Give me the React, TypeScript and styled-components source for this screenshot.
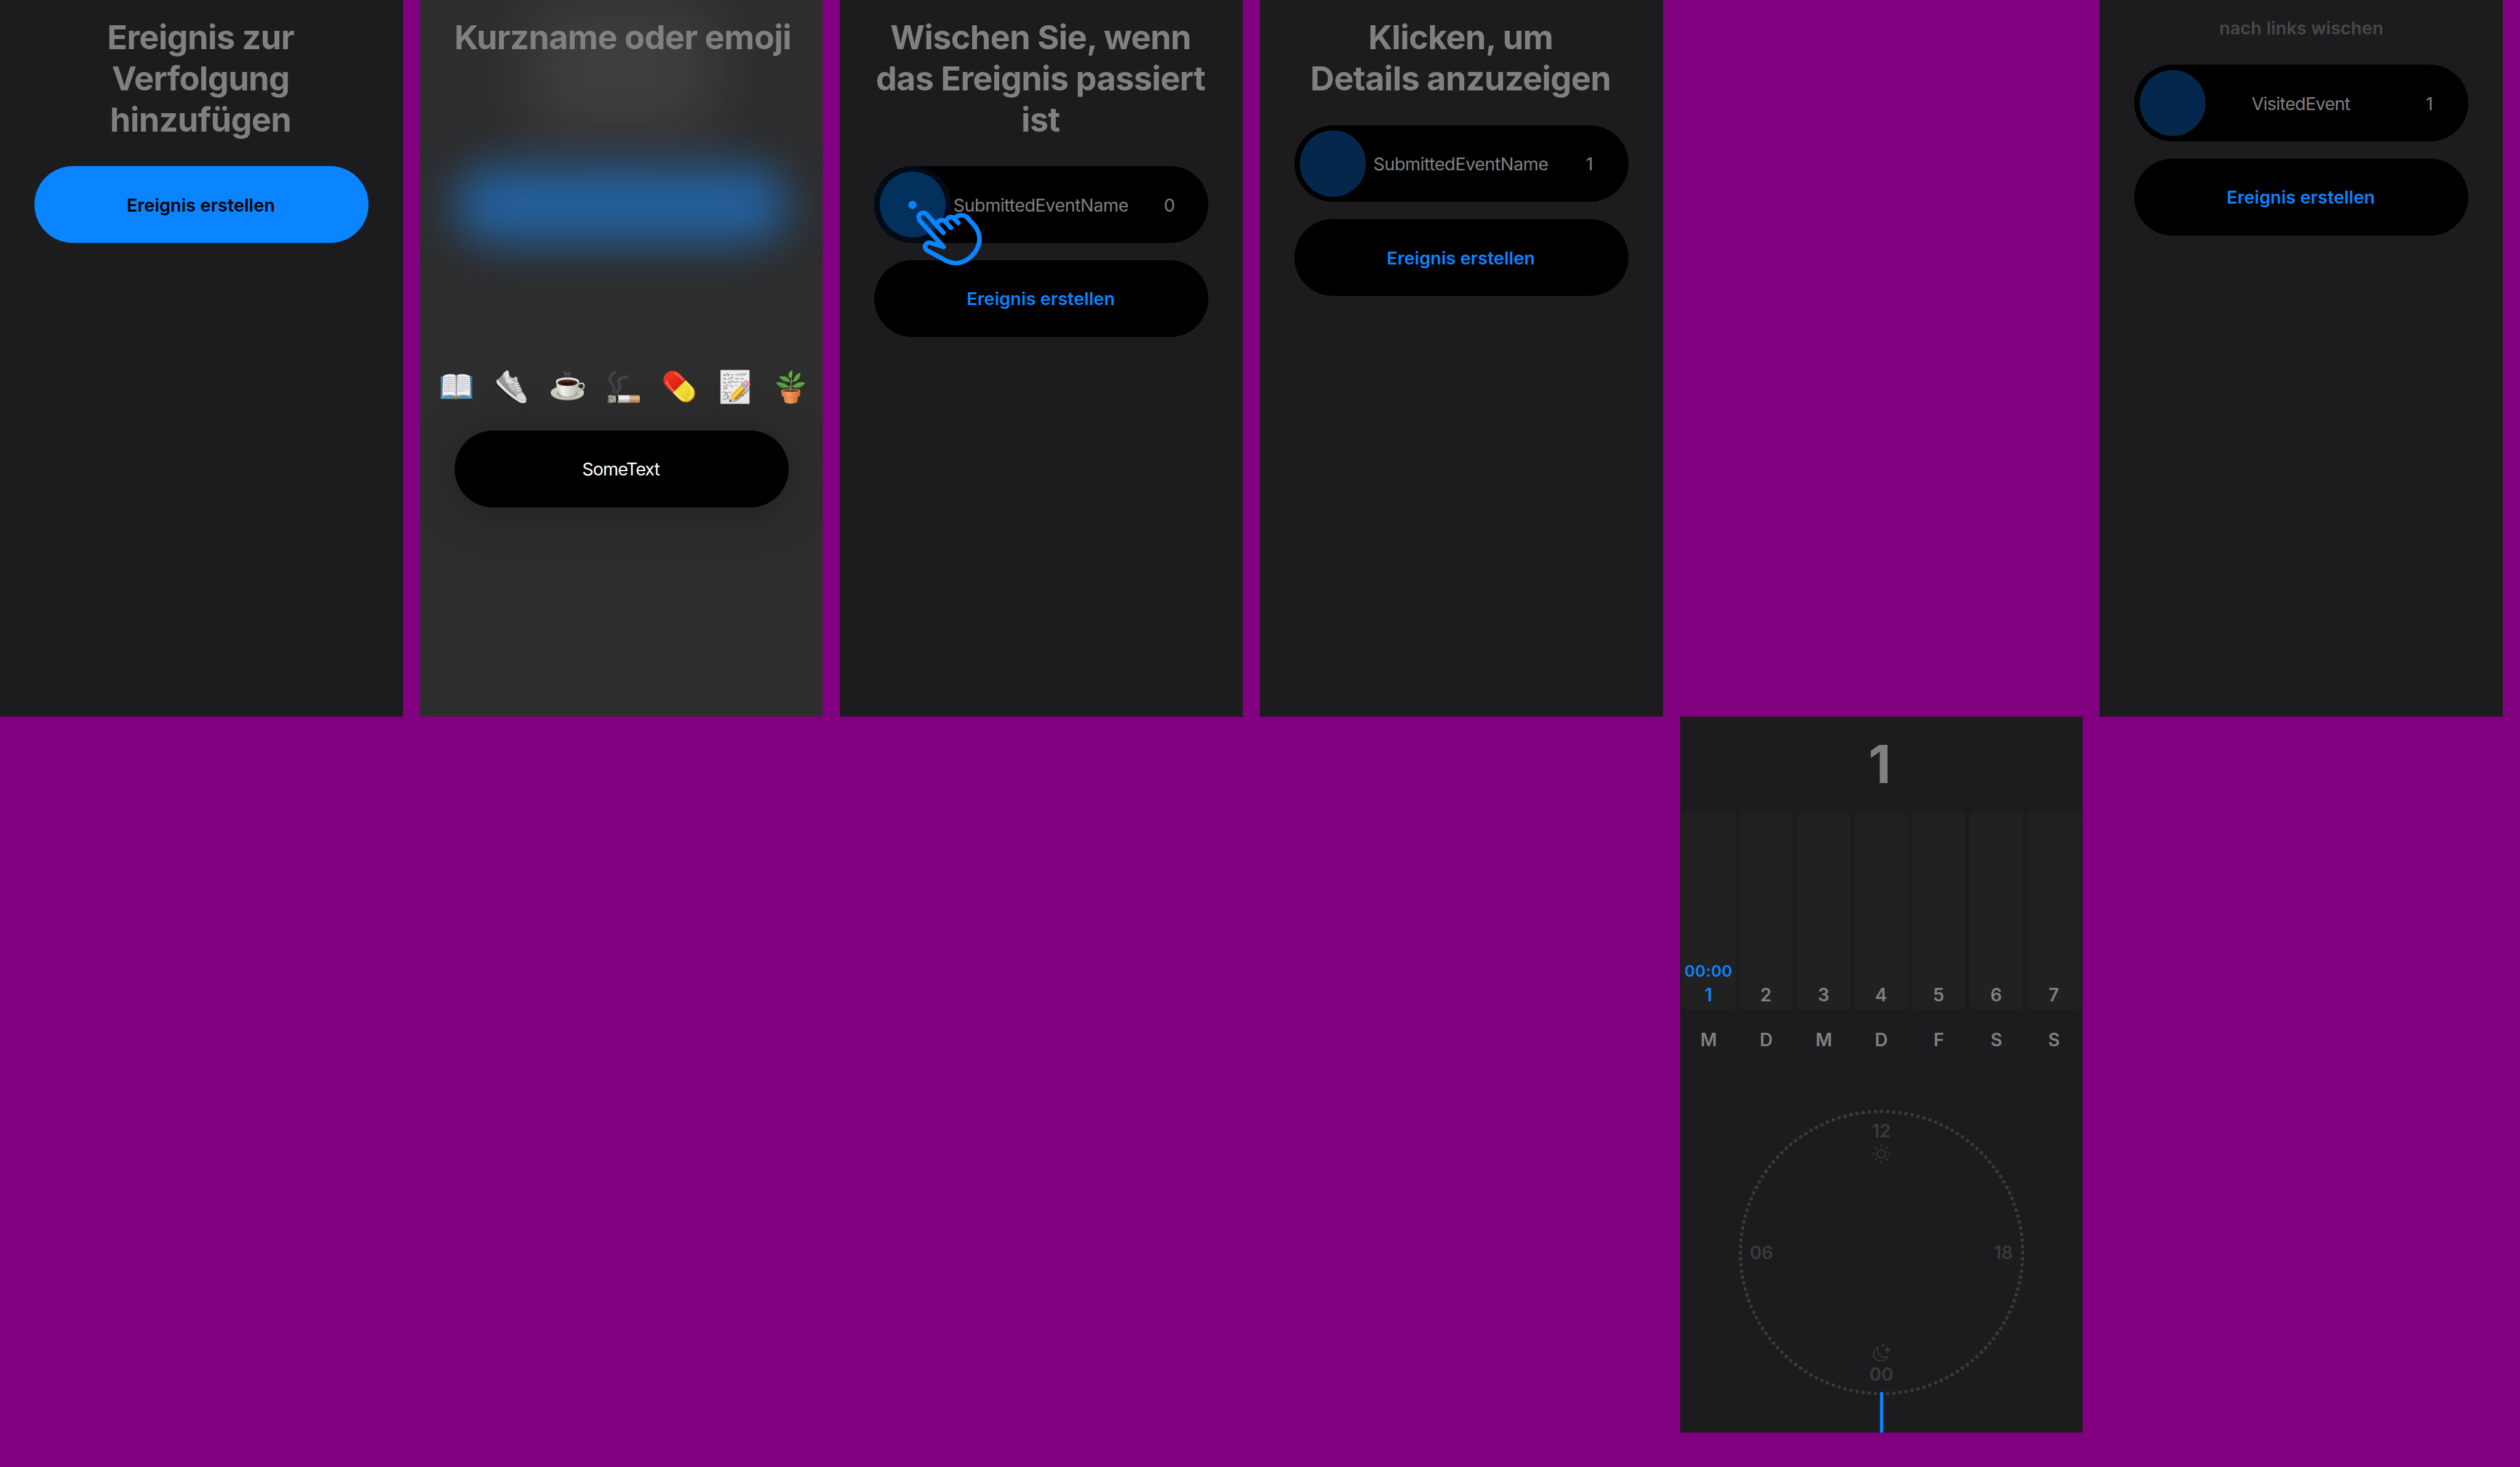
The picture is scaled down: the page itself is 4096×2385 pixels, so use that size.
import React from "react";
import styled, { createGlobalStyle, css } from "styled-components";

/* 1rem equals 100 design pixels of the 4692px wide board. */
const GlobalStyle = createGlobalStyle`
  html { font-size: calc(100vw / 46.92); }
  body {
    margin: 0;
    background: #800080;
    color: #808080;
    font-family: Inter, "Liberation Sans", sans-serif;
    overflow: hidden;
  }
  *, *::before, *::after { box-sizing: border-box; }
`;

const ACCENT = "#0a84ff";
const SURFACE = "#1c1c1e";
const FAINT = "#3a3a3c";

const Board = styled.main`
  display: grid;
  grid-template-columns: repeat(6, 7.5rem);
  grid-template-rows: repeat(2, 13.34rem);
  column-gap: 0.32rem;
  width: 46.92rem;
  height: 27.32rem;
  background: #800080;
`;

const Screen = styled.section<{ $column: number; $row?: number }>`
  grid-column: ${(p) => p.$column};
  grid-row: ${(p) => p.$row ?? 1};
  display: flex;
  flex-direction: column;
  background: ${SURFACE};
  overflow: hidden;
`;

const Onboarding = styled(Screen)`
  padding: 0.322rem 0.64rem;
`;

const Title = styled.h1`
  margin: 0 0.03rem 0.48rem 0;
  font-size: 0.62rem;
  font-weight: 680;
  line-height: 0.765rem;
  letter-spacing: -0.014em;
  text-align: center;
  white-space: nowrap;
`;

const TitleLine = styled.span`
  display: block;
`;

const Hint = styled.p`
  margin: 0 0 0.48rem;
  font-size: 0.33rem;
  font-weight: 600;
  line-height: 0.405rem;
  letter-spacing: 0.004em;
  text-align: center;
  color: #48484a;
`;

const Stack = styled.div`
  display: flex;
  flex-direction: column;
  gap: 0.32rem;
`;

const pill = css`
  height: 1.43rem;
  width: 100%;
  border-radius: 0.715rem;
  background: #000;
`;

const CreateButton = styled.button<{ $primary?: boolean }>`
  ${pill}
  border: 0;
  padding: 0.02rem 0.02rem 0 0;
  font: 620 0.33rem / 0.41rem Inter, "Liberation Sans", sans-serif;
  letter-spacing: 0.002em;
  color: ${(p) => (p.$primary ? "#000" : ACCENT)};
  ${(p) => p.$primary && `background: ${ACCENT};`}
`;

const EventRow = styled.div`
  ${pill}
  position: relative;
  display: grid;
  grid-template-columns: 1.43rem 1fr 1.43rem;
  align-items: center;
  justify-items: center;
  font-size: 0.33rem;
  line-height: 0.41rem;
`;

const KnobRing = styled.div<{ $pressed?: boolean }>`
  display: grid;
  place-items: center;
  width: 1.43rem;
  height: 1.43rem;
  border-radius: 50%;
  background: ${(p) => (p.$pressed ? "#010b16" : "transparent")};
`;

const Knob = styled.div<{ $pressed?: boolean }>`
  width: 1.23rem;
  height: 1.23rem;
  border-radius: 50%;
  background: ${(p) => (p.$pressed ? "#04305d" : "#03284c")};
`;

const EventName = styled.span<{ $tracking: number }>`
  padding: 0.02rem 0.02rem 0 0;
  letter-spacing: ${(p) => p.$tracking}em;
  white-space: nowrap;
`;

const EventCount = styled.span`
  padding: 0.02rem 0.02rem 0 0;
`;

const HandOverlay = styled.svg`
  position: absolute;
  left: -0.18rem;
  top: -0.1rem;
  width: 2.4rem;
  height: 2.1rem;
  z-index: 1;
`;

const ComposerScreen = styled(Onboarding)`
  position: relative;
  background: #2d2d2d;
  isolation: isolate;
`;

const GlowTitle = styled.div`
  position: absolute;
  z-index: -1;
  left: 2.05rem;
  top: 0.1rem;
  width: 3.4rem;
  height: 2.4rem;
  background: rgba(255, 255, 255, 0.085);
  filter: blur(0.6rem);
`;

const GlowButton = styled.div`
  position: absolute;
  z-index: -1;
  left: 0.64rem;
  top: 3.1rem;
  width: 6.22rem;
  height: 1.43rem;
  border-radius: 0.715rem;
  background: rgba(28, 140, 255, 0.55);
  filter: blur(0.42rem);
`;

const EmojiRow = styled.div`
  display: flex;
  gap: 0.4rem;
  margin: 5.253rem 0 0.48rem -0.285rem;
`;

const EmojiIcon = styled.svg`
  flex: none;
  width: 0.64rem;
  height: 0.72rem;
`;

const NameField = styled.div`
  ${pill}
  display: grid;
  place-items: center;
  flex: none;
  color: #fff;
  font-size: 0.33rem;
  line-height: 0.41rem;
  box-shadow: 0 0.06rem 0.9rem rgba(0, 0, 0, 0.32);
`;

const Total = styled.header`
  display: grid;
  place-items: center;
  height: 1.79rem;
  padding-right: 0.06rem;
  font-size: 0.97rem;
  font-weight: 700;
  line-height: 1;
`;

const Week = styled.div`
  display: grid;
  grid-template-columns: repeat(7, 1fr);
  font-size: 0.335rem;
  font-weight: 620;
  line-height: 0.41rem;
  text-align: center;
`;

const DayBar = styled.div<{ $active?: boolean }>`
  display: flex;
  flex-direction: column;
  justify-content: flex-end;
  gap: 0.06rem;
  height: 3.68rem;
  margin: 0 0.04rem;
  padding: 0 0.01rem 0.075rem 0;
  border-radius: 0.08rem;
  background: #212121;
  color: ${(p) => (p.$active ? ACCENT : "inherit")};
`;

const DayTime = styled.span`
  font-size: 0.295rem;
  line-height: 0.35rem;
  letter-spacing: 0.012em;
`;

const WeekNames = styled(Week)`
  margin-top: 0.36rem;
`;

const Dial = styled.div`
  position: relative;
  display: flex;
  flex-direction: column;
  justify-content: space-between;
  align-self: center;
  width: 5.26rem;
  height: 5.26rem;
  margin-top: 1.12rem;
  padding: 0.165rem 0.18rem 0.155rem 0.18rem;
  color: ${FAINT};
  font-size: 0.335rem;
  font-weight: 640;
  line-height: 0.41rem;
`;

const DialPole = styled.div`
  display: flex;
  flex-direction: column;
  align-items: center;
  gap: 0.03rem;
`;

const DialSides = styled.div`
  display: flex;
  justify-content: space-between;
`;

const DialDots = styled.svg`
  position: absolute;
  left: -0.1rem;
  top: -0.1rem;
  width: 5.46rem;
  height: 6.2rem;
`;

const DialIcon = styled.svg`
  width: 0.36rem;
  height: 0.36rem;
`;

function TitleBlock({ lines }: { lines: string[] }) {
  return (
    <Title>
      {lines.map((line) => (
        <TitleLine key={line}>{line}</TitleLine>
      ))}
    </Title>
  );
}

function SwipeHand() {
  return (
    <HandOverlay viewBox="0 0 720 630" fill="none" stroke={ACCENT} strokeWidth="26" strokeLinecap="round" strokeLinejoin="round">
      <circle cx="268.5" cy="244.5" r="23" fill={ACCENT} stroke="none" />
      <path d="M441 400L350 299C322 271 287 304 312 335L442 479L371 457C340 447 327 485 353 500L452 554C518 588 578 563 618 508C652 460 650 405 616 361L570 310C550 298 524 300 506 316" />
      <path d="M407 345C418 326 442 325 454 340L483 372M456 333C468 308 489 308 500 320L524 345" />
    </HandOverlay>
  );
}

type EventProps = { name: string; count: number; tracking?: number; pressed?: boolean };

function EventItem({ name, count, tracking = -0.018, pressed }: EventProps) {
  return (
    <EventRow>
      <KnobRing $pressed={pressed}>
        <Knob $pressed={pressed} />
      </KnobRing>
      <EventName $tracking={tracking}>{name}</EventName>
      <EventCount>{count}</EventCount>
      {pressed && <SwipeHand />}
    </EventRow>
  );
}

function Book() {
  const rows = [72, 83, 94, 105, 116, 127, 138, 149];
  return (
    <EmojiIcon viewBox="22.5 6 192 216" role="img" aria-label="Buch">
      <path d="M30 64L206 62L207 189L131 190Q118 196 105 191L30 191Z" fill="#2f7ba3" />
      <path d="M34 180H203V186H34Z" fill="#5fb0d6" />
      <path d="M102 181Q118 172 133 181Q130 192 118 192Q106 192 102 181Z" fill="#8a7420" />
      <path d="M41 66L39 179Q80 168 118 180Q156 168 198 179L196 66Z" fill="#a9a79f" />
      <path d="M45 60Q80 46 114 56L118 62L122 56Q156 46 192 60L194 171Q154 160 118 172Q84 160 42 171Z" fill="#f0f0f5" />
      <path d="M112 56H124L121 173H115Z" fill="#77767a" />
      <path d="M108 57L118 66V170L110 164Z" fill="#c6c5cc" />
      <g stroke="#85858f" strokeWidth="3" strokeDasharray="9 2 5 2 12 2">
        {rows.map((y) => (
          <path key={y} d={`M50 ${y}Q80 ${y - 6} 106 ${y}M129 ${y - 2}Q155 ${y - 6} ${y > 145 ? 166 : 187} ${y}`} fill="none" />
        ))}
      </g>
    </EmojiIcon>
  );
}

function Shoe() {
  return (
    <EmojiIcon viewBox="334.5 6 192 216" role="img" aria-label="Laufschuh">
      <path d="M343 86L352 82Q400 150 478 202L512 204Q506 216 490 214Q466 212 434 186Q380 140 344 102Z" fill="#d9d8d6" />
      <path d="M343 92L346 112Q372 134 392 154L436 188L470 210" fill="none" stroke="#161616" strokeWidth="4" />
      <path d="M356 78Q378 62 384 44L402 30L412 33L418 64L440 74L452 64L461 70L464 98L486 146Q510 172 513 194Q510 208 490 206Q470 202 440 176Q390 132 350 90Z" fill="#b3b0ae" />
      <path d="M372 66Q390 70 400 100L424 140L462 172L452 184Q400 144 356 88Z" fill="#989491" />
      <path d="M385 46L402 32L411 36L417 66L406 78Q388 70 385 46Z" fill="#e0dedc" />
      <path d="M392 70L428 78L446 100L418 106L398 96Z" fill="#dcdad8" />
      <path d="M432 78L452 66L460 74L462 96L446 98Z" fill="#c5c3c1" />
      <path d="M454 178Q464 158 488 158Q508 174 511 194Q480 206 454 178Z" fill="#dddcdb" />
      <path d="M446 108L468 102M450 120L474 114M456 132L480 128M462 146L484 140" stroke="#f1f0ef" strokeWidth="6" strokeLinecap="round" />
      <path d="M412 112L436 116L420 124L444 128M428 132L450 138" fill="none" stroke="#d5d3d1" strokeWidth="4" />
      <circle cx="437" cy="88" r="2.5" fill="#444" />
      <circle cx="446" cy="87" r="2.5" fill="#444" />
      <path d="M349 90Q400 148 462 194Q488 210 510 202" fill="none" stroke="#f0efee" strokeWidth="7" />
    </EmojiIcon>
  );
}

function Coffee() {
  return (
    <EmojiIcon viewBox="644.5 6 192 216" role="img" aria-label="Kaffee">
      <defs>
        <linearGradient id="cup" x1="0" x2="1">
          <stop offset="0" stopColor="#cfccc4" />
          <stop offset="0.3" stopColor="#f3f1ec" />
          <stop offset="1" stopColor="#bab7ae" />
        </linearGradient>
      </defs>
      <ellipse cx="738" cy="159" rx="93" ry="39" fill="#a8a59d" />
      <ellipse cx="738" cy="154" rx="93" ry="38" fill="#cfccc4" />
      <ellipse cx="738" cy="160" rx="62" ry="25" fill="#aeaba2" />
      <path d="M800 108Q828 94 832 116Q833 138 792 148" fill="none" stroke="#b9b6ae" strokeWidth="8" />
      <path d="M801 106Q825 95 829 114" fill="none" stroke="#efede8" strokeWidth="4" />
      <path d="M675 92Q676 148 706 170Q738 186 772 170Q801 148 803 92Z" fill="url(#cup)" />
      <ellipse cx="739" cy="93" rx="65" ry="23" fill="#f1eee8" />
      <ellipse cx="739" cy="98" rx="57" ry="19" fill="#8b7d70" />
      <ellipse cx="739" cy="101" rx="54" ry="16" fill="#3b1e12" />
      <ellipse cx="742" cy="106" rx="36" ry="8" fill="#24100a" />
      <path d="M718 38Q736 44 728 56Q724 68 738 74M752 40Q734 50 744 60Q748 68 740 96M722 52Q742 42 756 54" fill="none" stroke="#8b8b8b" strokeWidth="4" strokeOpacity="0.6" strokeLinecap="round" />
    </EmojiIcon>
  );
}

function Cigarette() {
  return (
    <EmojiIcon viewBox="958.5 6 192 216" role="img" aria-label="Zigarette">
      <defs>
        <linearGradient id="paper" x2="0" y2="1">
          <stop offset="0" stopColor="#d8d8dc" />
          <stop offset="0.35" stopColor="#ffffff" />
          <stop offset="1" stopColor="#9a9aa0" />
        </linearGradient>
        <linearGradient id="filterTip" x2="0" y2="1">
          <stop offset="0" stopColor="#c08f63" />
          <stop offset="0.35" stopColor="#edbe92" />
          <stop offset="1" stopColor="#a1744e" />
        </linearGradient>
        <filter id="smoke" x="-30%" y="-20%" width="160%" height="140%">
          <feGaussianBlur stdDeviation="4" />
        </filter>
      </defs>
      <g fill="none" stroke="#8a8a8a" strokeOpacity="0.3" strokeLinecap="round" filter="url(#smoke)">
        <path d="M1006 40Q966 66 980 94Q1012 128 994 156" strokeWidth="12" />
        <path d="M1074 67Q1018 70 1026 98Q1046 130 1012 156" strokeWidth="13" />
      </g>
      <rect x="1010" y="169" width="78" height="43" fill="url(#paper)" />
      <path d="M1086 169H1142Q1148 190 1142 212H1086Z" fill="url(#filterTip)" />
      <path d="M1006 169H1020Q1030 190 1018 212H1006Z" fill="#231709" />
      <path d="M964 172L980 167L992 171L1010 170Q1016 190 1010 211L994 210L978 214L963 209L967 192Z" fill="#8d877c" />
      <path d="M972 176L978 208M984 172L986 206M996 174L992 208M1004 176L1004 206" stroke="#d9d4ca" strokeWidth="4" />
      <path d="M966 182L976 190M966 206L978 198M989 180L990 196" stroke="#4b463e" strokeWidth="4" />
    </EmojiIcon>
  );
}

function Capsule() {
  return (
    <EmojiIcon viewBox="220.5 6 192 216" role="img" aria-label="Tablette">
      <defs>
        <linearGradient id="capsule" gradientUnits="userSpaceOnUse" x1="240" y1="46" x2="386" y2="196">
          <stop offset="0" stopColor="#f0341f" />
          <stop offset="0.5" stopColor="#dd2112" />
          <stop offset="0.5" stopColor="#f3e23a" />
          <stop offset="1" stopColor="#e9cf22" />
        </linearGradient>
      </defs>
      <path d="M277 85L350 158" stroke="#a8521c" strokeWidth="104" strokeLinecap="round" />
      <path d="M277 84L350 157" stroke="url(#capsule)" strokeWidth="98" strokeLinecap="round" />
      <path d="M243 92Q250 116 282 146" fill="none" stroke="#ff9d8c" strokeWidth="8" strokeLinecap="round" strokeOpacity="0.75" />
      <path d="M284 150Q310 184 340 196" fill="none" stroke="#fffbd0" strokeWidth="6" strokeLinecap="round" strokeOpacity="0.8" />
      <path d="M290 48Q316 58 334 82" fill="none" stroke="#ff7564" strokeWidth="12" strokeLinecap="round" strokeOpacity="0.7" />
      <path d="M350 96Q386 122 386 152Q384 178 366 190" fill="none" stroke="#fff79a" strokeWidth="7" strokeLinecap="round" strokeOpacity="0.75" />
    </EmojiIcon>
  );
}

function Memo() {
  const scribbles = [
    "M564 60q6-16 6-4t8-2t10 2t6-4M604 56q4-8 7 0t7-2M630 56q5-7 9 0t8-2t8 1t9-3t9 2t8-1t10 0",
    "M562 80q6-14 8-2t9-2M590 78q6-8 9 0t7-6t10 5M630 78q6-12 8-1t9-1M658 78q5-6 8 0t9-4",
    "M562 101q6-14 8-2t9-2M588 99q5-13 8-1t8-2t8-5t9 6t9-2t10 0t8-1M656 98q6-8 12 0",
    "M562 118q6-8 9 0t8-2t10 0M598 116q6-8 9 3t10-3M630 116q4-8 7 0",
    "M562 133q5-12 8-1t7-2t7 1",
    "M562 155q6-14 8-2t7-1M590 154q5-7 8 0t8-1",
    "M562 174q6-10 8-1t8-11t8 10t7-1M660 172q6-8 8-1t8-1",
    "M562 193q5-12 8-1t8-2t8-3M594 196q6-12 6 6",
  ];
  return (
    <EmojiIcon viewBox="532.5 6 192 216" role="img" aria-label="Notiz">
      <rect x="546" y="28" width="163" height="190" fill="#c9c9c9" />
      <rect x="549" y="31" width="157" height="184" fill="#ededed" />
      <g fill="none" stroke="#3f3f42" strokeWidth="2.4" strokeLinecap="round">
        {scribbles.map((d) => (
          <path key={d} d={d} />
        ))}
      </g>
      <path d="M606 212L716 120L700 150L640 200Z" fill="#000" fillOpacity="0.3" />
      <g transform="translate(596 207) rotate(-46.5)">
        <path d="M0 0L30 -19L38 0L30 19Z" fill="#ecc796" />
        <path d="M0 0L12 -8V8Z" fill="#333" />
        <path d="M30 -19H112V19H30Q40 12 32 6Q40 0 32 -7Q40 -12 30 -19Z" fill="#f6bd22" />
        <path d="M34 -7H112V6H34Z" fill="#ffd75a" />
        <path d="M32 6H112V19H30Z" fill="#cf8c10" />
        <rect x="112" y="-20" width="18" height="40" fill="#8fa3b3" />
        <path d="M116 -20V20M124 -20V20" stroke="#c9d6df" strokeWidth="3" />
        <path d="M130 -20H144Q156 -20 156 0Q156 20 144 20H130Z" fill="#ef8f96" />
        <path d="M130 -14H144Q150 -12 150 -2H130Z" fill="#f7b4b6" />
      </g>
    </EmojiIcon>
  );
}

function Plant() {
  return (
    <EmojiIcon viewBox="844.5 6 192 216" role="img" aria-label="Topfpflanze">
      <defs>
        <linearGradient id="pot" x1="0" x2="1">
          <stop offset="0" stopColor="#d9793f" />
          <stop offset="0.4" stopColor="#f59a5c" />
          <stop offset="1" stopColor="#cc6a33" />
        </linearGradient>
      </defs>
      <path d="M896 164L904 210Q938 224 974 210L981 164Z" fill="url(#pot)" />
      <path d="M897 178Q938 192 980 178L981 166H896Z" fill="#b9602f" fillOpacity="0.6" />
      <path d="M885 142Q938 130 992 142L990 174Q938 190 888 174Z" fill="url(#pot)" />
      <ellipse cx="938" cy="143" rx="52" ry="9" fill="#f0a878" />
      <ellipse cx="938" cy="144" rx="46" ry="7" fill="#5f3626" />
      <path d="M936 143Q940 112 943 92Q944 78 938 66M938 128L922 118M940 122L956 116M942 98L926 86M943 96L958 84" fill="none" stroke="#7fae3c" strokeWidth="4.5" strokeLinecap="round" />
      <path d="M946 28Q952 62 936 74Q910 52 946 28Z" fill="#5fa838" />
      <path d="M992 42Q992 88 954 94Q950 62 992 42Z" fill="#57a035" />
      <path d="M874 66Q920 52 935 92Q898 104 874 66Z" fill="#4f9831" />
      <path d="M855 98Q902 88 926 124Q884 144 855 98Z" fill="#4b932f" />
      <path d="M1020 101Q976 84 950 122Q986 142 1020 101Z" fill="#539c33" />
      <path d="M944 34Q938 54 937 72M988 48Q972 72 955 92M878 68Q910 74 933 90M860 100Q894 110 924 123M1014 102Q980 110 952 121" fill="none" stroke="#9bd06a" strokeWidth="2.5" />
    </EmojiIcon>
  );
}

function SunIcon() {
  return (
    <DialIcon viewBox="-18 -18 36 36" fill="none" stroke={FAINT} strokeWidth="2.4" strokeLinecap="round">
      <circle r="7.6" strokeWidth="2" />
      {Array.from({ length: 8 }, (_, i) => (
        <path key={i} d="M0 -13.2V-16.8" transform={`rotate(${i * 45})`} />
      ))}
    </DialIcon>
  );
}

function MoonIcon() {
  return (
    <DialIcon viewBox="135 0 108 108" fill={FAINT}>
      <path d="M173 24C134 40 138 102 186 102.5C207 102 221 90 226 78C192 88 160 62 173 24Z" fill="none" stroke={FAINT} strokeWidth="5.5" strokeLinejoin="round" />
      <path d="M224 21Q226 38 243 40Q226 42 224 60Q222 42 205 40Q222 38 224 21Z" stroke={FAINT} strokeWidth="2" strokeLinejoin="round" />
      <path d="M200 2Q201 12 211 13.5Q201 15 200 25Q199 15 189 13.5Q199 12 200 2Z" stroke={FAINT} strokeWidth="1.5" strokeLinejoin="round" />
    </DialIcon>
  );
}

const days = ["M", "D", "M", "D", "F", "S", "S"];

export default function App() {
  return (
    <>
      <GlobalStyle />
      <Board>
        <Onboarding $column={1}>
          <TitleBlock lines={["Ereignis zur", "Verfolgung", "hinzufügen"]} />
          <CreateButton $primary>Ereignis erstellen</CreateButton>
        </Onboarding>

        <ComposerScreen $column={2}>
          <GlowTitle />
          <GlowButton />
          <TitleBlock lines={["Kurzname oder emoji"]} />
          <EmojiRow>
            <Book />
            <Shoe />
            <Coffee />
            <Cigarette />
            <Capsule />
            <Memo />
            <Plant />
          </EmojiRow>
          <NameField>
            <EventName $tracking={-0.034}>SomeText</EventName>
          </NameField>
        </ComposerScreen>

        <Onboarding $column={3}>
          <TitleBlock lines={["Wischen Sie, wenn", "das Ereignis passiert", "ist"]} />
          <Stack>
            <EventItem name="SubmittedEventName" count={0} pressed />
            <CreateButton>Ereignis erstellen</CreateButton>
          </Stack>
        </Onboarding>

        <Onboarding $column={4}>
          <TitleBlock lines={["Klicken, um", "Details anzuzeigen"]} />
          <Stack>
            <EventItem name="SubmittedEventName" count={1} />
            <CreateButton>Ereignis erstellen</CreateButton>
          </Stack>
        </Onboarding>

        <Screen $column={5} $row={2}>
          <Total>1</Total>
          <Week>
            {days.map((_, i) => (
              <DayBar key={i} $active={i === 0}>
                {i === 0 && <DayTime>00:00</DayTime>}
                <span>{i + 1}</span>
              </DayBar>
            ))}
          </Week>
          <WeekNames>
            {days.map((day, i) => (
              <span key={i}>{day}</span>
            ))}
          </WeekNames>
          <Dial>
            <DialDots viewBox="-273 -273 546 620">
              {Array.from({ length: 144 }, (_, i) => (
                <circle key={i} cy={-262.8} r="3.3" fill={FAINT} transform={`rotate(${i * 2.5})`} />
              ))}
              <path d="M0 262.5V347" stroke={ACCENT} strokeWidth="6" strokeLinecap="round" />
            </DialDots>
            <DialPole>
              <span>12</span>
              <SunIcon />
            </DialPole>
            <DialSides>
              <span>06</span>
              <span>18</span>
            </DialSides>
            <DialPole>
              <MoonIcon />
              <span>00</span>
            </DialPole>
          </Dial>
        </Screen>

        <Onboarding $column={6}>
          <Hint>nach links wischen</Hint>
          <Stack>
            <EventItem name="VisitedEvent" count={1} tracking={-0.025} />
            <CreateButton>Ereignis erstellen</CreateButton>
          </Stack>
        </Onboarding>
      </Board>
    </>
  );
}
